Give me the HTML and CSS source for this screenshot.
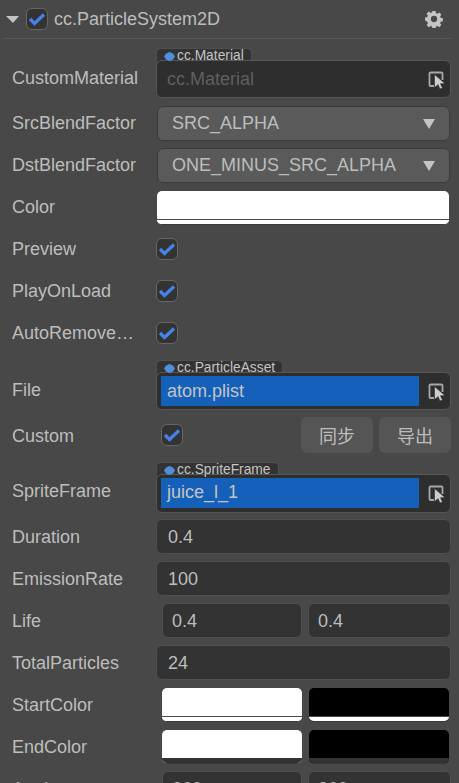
FILE: index.html
```html
<!DOCTYPE html>
<html lang="en">
<head>
  <meta charset="UTF-8" />
  <title>cc.ParticleSystem2D</title>
  <link rel="stylesheet" href="styles.css">
</head>
<body>
  <svg class="defs" width="0" height="0">
    <symbol id="check" viewBox="0 0 20 20"><path d="M3 10l4.500 4.500L17 5.500" fill="none" stroke="#4484ea" stroke-width="3.200"/></symbol>
    <symbol id="pick" viewBox="0 0 18 18">
      <path d="M6 15H2.500a1 1 0 0 1-1-1V2.500a1 1 0 0 1 1-1h11a1 1 0 0 1 1 1V9" fill="none" stroke="#a8a8a8" stroke-width="1.800"/>
      <path d="M6.500 3.500L17 12.500l-4.500.3 2 4.200-2.600 1-1.800-4.300-3.600 2.800z" fill="#cccccc" stroke="#2e2e2e" stroke-width=".6"/>
    </symbol>
    <symbol id="cube" viewBox="0 0 11 9"><path d="M5.500 0l3.500 1.500 2 3-2 3-3.500 1.500-3.500-1.500-2-3 2-3z" fill="#4f8fdc"/></symbol>
  </svg>

  <header class="head">
    <span class="fold"></span>
    <span class="check"><svg><use href="#check"/></svg></span>
    <span class="title">cc.ParticleSystem2D</span>
    <svg class="gear" viewBox="0 0 20 20">
      <path fill="#c4c4c4" fill-rule="evenodd" d="M8.300 1h3.400l.5 2.500 1.500.6 2.100-1.400 2.400 2.400-1.400 2.100.6 1.500 2.500.5v3.400l-2.500.5-.6 1.500 1.400 2.100-2.400 2.400-2.100-1.400-1.500.6-.5 2.500H8.300l-.5-2.500-1.500-.6-2.100 1.400-2.400-2.400 1.400-2.100-.6-1.500L.1 11.700V8.300l2.500-.5.6-1.500-1.400-2.100 2.400-2.400 2.100 1.400 1.500-.6zM10 6.500a3.500 3.500 0 1 0 0 7 3.500 3.500 0 0 0 0-7z"/>
    </svg>
  </header>

  <main class="props">
    <div class="row row-asset first">
      <label>CustomMaterial</label>
      <div class="asset">
        <span class="tag"><svg class="cube"><use href="#cube"/></svg>cc.Material</span>
        <div class="asset-box">
          <span class="asset-name empty">cc.Material</span>
          <svg class="pick"><use href="#pick"/></svg>
        </div>
      </div>
    </div>

    <div class="row upper">
      <label>SrcBlendFactor</label>
      <div class="select">SRC_ALPHA<span class="arrow"></span></div>
    </div>
    <div class="row upper">
      <label>DstBlendFactor</label>
      <div class="select">ONE_MINUS_SRC_ALPHA<span class="arrow"></span></div>
    </div>
    <div class="row upper">
      <label>Color</label>
      <div class="color white single"><i class="alpha"></i></div>
    </div>
    <div class="row upper">
      <label>Preview</label>
      <span class="check"><svg><use href="#check"/></svg></span>
    </div>
    <div class="row upper">
      <label>PlayOnLoad</label>
      <span class="check"><svg><use href="#check"/></svg></span>
    </div>
    <div class="row upper">
      <label>AutoRemove…</label>
      <span class="check"><svg><use href="#check"/></svg></span>
    </div>

    <div class="row row-asset">
      <label>File</label>
      <div class="asset">
        <span class="tag"><svg class="cube"><use href="#cube"/></svg>cc.ParticleAsset</span>
        <div class="asset-box">
          <span class="asset-name set">atom.plist</span>
          <svg class="pick"><use href="#pick"/></svg>
        </div>
      </div>
    </div>

    <div class="row row-custom">
      <label>Custom</label>
      <span class="check inset"><svg><use href="#check"/></svg></span>
      <div class="buttons">
        <button>同步</button>
        <button>导出</button>
      </div>
    </div>

    <div class="row row-asset sprite">
      <label>SpriteFrame</label>
      <div class="asset">
        <span class="tag"><svg class="cube"><use href="#cube"/></svg>cc.SpriteFrame</span>
        <div class="asset-box">
          <span class="asset-name set">juice_l_1</span>
          <svg class="pick"><use href="#pick"/></svg>
        </div>
      </div>
    </div>

    <div class="row tight">
      <label>Duration</label>
      <div class="num">0.4</div>
    </div>
    <div class="row">
      <label>EmissionRate</label>
      <div class="num">100</div>
    </div>
    <div class="row">
      <label>Life</label>
      <div class="pair">
        <div class="num">0.4</div>
        <div class="num">0.4</div>
      </div>
    </div>
    <div class="row">
      <label>TotalParticles</label>
      <div class="num">24</div>
    </div>
    <div class="row">
      <label>StartColor</label>
      <div class="pair">
        <div class="color white"><i class="alpha"></i></div>
        <div class="color black"><i class="alpha"></i></div>
      </div>
    </div>
    <div class="row">
      <label>EndColor</label>
      <div class="pair">
        <div class="color white"><i class="alpha none"></i></div>
        <div class="color black"><i class="alpha none"></i></div>
      </div>
    </div>
    <div class="row">
      <label>Angle</label>
      <div class="pair">
        <div class="num">360</div>
        <div class="num">360</div>
      </div>
    </div>
  </main>
</body>
</html>
```

FILE: styles.css
```css
* {
  box-sizing: border-box;
}

html, body {
  height: 783px;
  overflow: hidden;
}

body {
  margin: 0;
  background: #484848;
  color: #bdbdbd;
  font-family: "Liberation Sans", Arial, "Noto Sans CJK SC", sans-serif;
  font-size: 18px;
}

.defs {
  display: block;
  height: 0;
}

.head {
  display: flex;
  align-items: center;
  height: 39px;
  margin: 0 8px 0 3px;
  padding: 0 8px 0 3px;
  border-bottom: 1px solid #585858;
}

.fold {
  width: 0;
  height: 0;
  margin-right: 7px;
  border-left: 7px solid transparent;
  border-right: 6px solid transparent;
  border-top: 7px solid #c4c4c4;
}

.title {
  flex: 1;
  margin-left: 6px;
}

.gear {
  width: 18px;
  height: 18px;
}

.check {
  display: block;
  width: 22px;
  height: 22px;
  flex: none;
  background: #333;
  border: 1px solid #666;
  border-radius: 6px;
}

.check svg {
  display: block;
  width: 20px;
  height: 20px;
}

.row .check {
  margin-bottom: 1px;
}

.check.inset {
  margin-left: 5px;
  margin-bottom: 0;
}

.props {
  display: flex;
  flex-direction: column;
  gap: 7px;
  padding: 7px 8px 0 12px;
}

.row {
  display: flex;
  align-items: center;
  flex: none;
  height: 35px;
}

.row label {
  flex: none;
  width: 144px;
  padding-top: 2px;
  white-space: nowrap;
}

.row.upper label {
  padding-top: 0;
}

.row-asset {
  height: 52px;
  align-items: flex-end;
}

.row-asset label {
  padding: 0 0 1px;
  line-height: 38px;
}

.first {
  margin-bottom: 1px;
}

.row-custom {
  height: 36px;
}

.tight {
  margin-top: -1px;
}

.sprite {
  height: 53px;
}

.sprite .asset-box {
  align-items: flex-start;
  height: 39px;
}

.sprite label {
  padding-bottom: 3px;
}

.sprite .asset-name {
  line-height: 28px;
}

.asset {
  flex: 1;
  min-width: 0;
}

.tag {
  display: block;
  width: fit-content;
  height: 14px;
  padding: 0 7px;
  background: #333;
  border: 1px solid #4f4f4f;
  border-bottom: none;
  border-radius: 5px 5px 0 0;
  color: #c4c4c4;
  font-size: 13.800px;
  line-height: 14px;
}

.cube {
  display: inline-block;
  width: 11px;
  height: 9px;
  margin-right: 2px;
  vertical-align: -1px;
}

.asset-box {
  display: flex;
  align-items: center;
  gap: 9px;
  height: 38px;
  margin-top: -2px;
  padding: 3px 4px 3px 4px;
  background: #2e2e2e;
  border: 1px solid #565656;
  border-radius: 6px;
}

.asset-name {
  flex: 1;
  height: 30px;
  padding: 0 6px;
  line-height: 30px;
}

.asset-name.empty {
  color: #5f5f5f;
}

.asset-name.set {
  background: #1560b8;
  color: #c4c4c4;
}

.pick {
  flex: none;
  width: 18px;
  height: 18px;
  margin-top: 2px;
}

.sprite .pick {
  margin-top: 7px;
}

.select {
  display: flex;
  align-items: center;
  justify-content: space-between;
  flex: 1;
  height: 35px;
  margin: 0 1px;
  padding: 0 14px;
  background: #5a5a5a;
  border: 1px solid #3a3a3a;
  border-radius: 6px;
}

.arrow {
  width: 0;
  height: 0;
  border-left: 6px solid transparent;
  border-right: 6px solid transparent;
  border-top: 10px solid #c4c4c4;
}

.color {
  flex: 1;
  height: 34px;
  border-radius: 5px;
  overflow: hidden;
  border-bottom: 1px solid #3a3a3a;
}

.color.single {
  margin: 0 2px 0 1px;
}

.color.white {
  background: #fff;
}

.color.black {
  background: #000;
  margin: 0 2px 0 1px;
}

.alpha {
  display: block;
  height: 5px;
  margin-top: 28px;
  border-top: 1px solid #4a4a4a;
  background: #fff;
}

.alpha.none {
  height: 6px;
  background: #333;
  border-top: none;
  margin-top: 28px;
}

.buttons {
  display: flex;
  gap: 6px;
  margin-left: auto;
}

button {
  width: 72px;
  height: 36px;
  background: #555;
  border: none;
  border-radius: 6px;
  color: #bdbdbd;
  font: inherit;
}

.num {
  min-width: 0;
  flex: 1;
  height: 35px;
  padding: 0 11px;
  background: #333;
  border: 1px solid #4f4f4f;
  border-radius: 6px;
  line-height: 35px;
}

.pair {
  display: grid;
  grid-template-columns: 140px 1fr;
  flex: 1;
  gap: 6px;
  margin-left: 6px;
}

.pair .num {
  padding-left: 9px;
}
```
